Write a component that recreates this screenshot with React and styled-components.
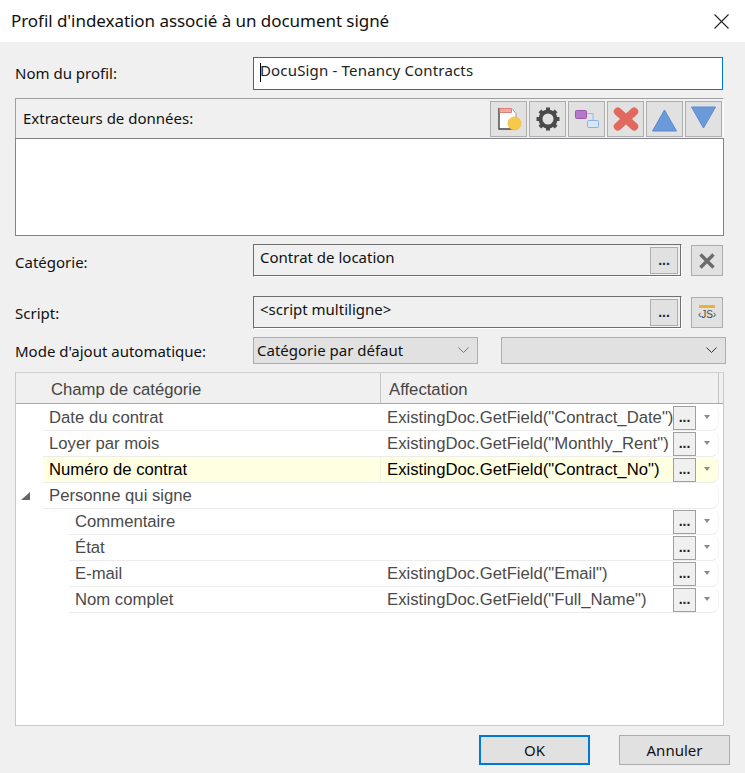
import React from "react";
import styled, { createGlobalStyle } from "styled-components";

const Global = createGlobalStyle`
  html, body { margin: 0; padding: 0; background: #f0f0f0; }
  * { box-sizing: border-box; }
`;
const UI = `"Noto Sans", "Open Sans", sans-serif`;
const GRID = `"Liberation Sans", Arial, sans-serif`;

const Dialog = styled.div`
  width: 745px; height: 773px; background: #f0f0f0; overflow: hidden;
  font-family: ${UI}; font-size: 15px; color: #000;
  display: flex; flex-direction: column;
`;
const TitleBar = styled.div`
  height: 42px; background: #fff; display: flex; align-items: center;
  justify-content: space-between; padding: 0 16px 0 11px; flex: none;
`;
const Title = styled.div`font-size: 17px; letter-spacing: -0.05px; color: #111; padding-bottom: 2px;`;
const CloseIcon = styled.svg`width: 15px; height: 15px; display: block;`;
const Content = styled.div`
  flex: 1; display: flex; flex-direction: column; padding: 15px 21px 0 15px;
`;
const FormRow = styled.div`
  display: grid; grid-template-columns: 238px 1fr; align-items: center;
  height: ${p => p.$h}px;
`;
const Label = styled.label`
  font-size: 15px; color: #111; padding-bottom: ${p => p.$pb || 0}px; padding-top: ${p => p.$pt || 0}px;
`;
const TextInput = styled.div`
  height: 33px; width: 470px; border: 1px solid #0078d7; background: #fff;
  padding: 0 6px 8px; display: flex; align-items: center;
  font-size: 15px; letter-spacing: 0.17px; color: #222; position: relative;
`;
const Caret = styled.span`
  position: absolute; left: 6px; top: 5px; width: 1px; height: 19px; background: #000;
`;
const Panel = styled.div`width: 709px; margin-top: 8px; flex: none;`;
const PanelHead = styled.div`
  height: 40px; border: 1px solid #a0a0a0; border-bottom: none; border-right-color: #fff;
  display: flex; align-items: center; justify-content: space-between; padding: 0 1px 0 7px;
`;
const Tools = styled.div`display: flex; gap: 2px; margin-top: 1px;`;
const ToolBtn = styled.button`
  width: 37px; height: 36px; padding: 0; background: #e1e1e1; border: 1px solid #adadad;
  display: flex; align-items: center; justify-content: center;
`;
const ListBox = styled.div`
  height: 98px; background: #fff; border: 1px solid #82828a;
`;
const PickerRow = styled.div`
  display: grid; grid-template-columns: 238px 429px 32px; align-items: center;
  margin-top: ${p => p.$mt}px; height: 33px;
`;
const Field = styled.div`
  height: 33px; width: 429px; background: #f0f0f0; border: 1px solid #6e6e6e;
  border-right-color: #fff; border-bottom-color: #fff; box-shadow: inset -1px -1px 0 #6e6e6e;
  display: flex; align-items: flex-start; justify-content: space-between;
  padding: 2px 3px 0 6px; font-size: 15px; color: #111; line-height: 20px;
`;
const Dots = styled.button`
  width: 28px; height: 27px; padding: 0 0 6px;
  background: #e1e1e1; border: 1px solid #adadad; font-family: ${GRID};
  font-size: 14px; font-weight: 700; color: #1a2a4a; line-height: 1; flex: none;
  display: flex; align-items: flex-end; justify-content: center;
`;
const RowDots = styled(Dots)`
  width: 23px; height: 24px; background: #f0f0f0; border-color: #a0a0a0; color: #222; padding-bottom: 5px;
`;
const SideBtn = styled.button`
  width: 32px; height: 31px; margin-left: 9px; padding: 0; background: #e1e1e1;
  border: 1px solid #adadad; display: flex; align-items: center; justify-content: center;
`;
const JsIcon = styled.span`
  display: flex; flex-direction: column; align-items: center; width: 17px; gap: 1px;
`;
const JsBar = styled.span`width: 16px; height: 3px; background: #f0b030; display: block;`;
const JsLabel = styled.span`
  font-family: ${GRID}; font-size: 10px; color: #444; line-height: 11px; letter-spacing: -0.1px; white-space: nowrap;
`;
const ModeRow = styled.div`
  display: grid; grid-template-columns: 238px 225px 225px; align-items: center;
  height: 27px; margin-top: 8px;
`;
const Select = styled.div`
  height: 27px; width: 225px; margin-left: ${p => p.$ml || 0}px; background: #e1e1e1;
  border: 1px solid #adadad; display: flex; align-items: center; justify-content: space-between;
  padding: 0 8px 1px 3px; font-size: 15px; color: #111;
`;
const Chevron = styled.svg`width: 11px; height: 6px; display: block; flex: none;`;
const Grid = styled.div`
  width: 709px; height: 354px; margin-top: 8px; background: #fff;
  border: 1px solid #c8c8c8; border-top-color: #d0d0d0; font-family: ${GRID}; font-size: 16.7px;
  flex: none;
`;
const Head = styled.div`
  height: 31px; background: #f0f0f0; border-bottom: 1px solid #a8a8a8;
  display: grid; grid-template-columns: 365px 338px 1fr; color: #444;
`;
const HeadCell = styled.div`
  padding: 3px 0 0 ${p => p.$pl}px; display: flex; align-items: center;
  border-right: 1px solid ${p => (p.$plain ? "transparent" : "#c4c4c4")};
`;
const Body = styled.div`padding-top: 1px;`;
const Row = styled.div`
  height: 26px; margin-left: ${p => p.$indent}px; width: ${p => 703 - p.$indent}px;
  display: grid; grid-template-columns: ${p => 364 - p.$indent}px 1fr; align-items: center;
  background: ${p => (p.$active ? "#ffffe1" : "#fff")};
  border-bottom: 1px solid #ececec; border-right: 1px solid #f2f2f2;
  border-radius: 0 8px 8px 0;
  color: ${p => (p.$active ? "#000" : "#4a4a4a")}; position: relative;
`;
const RowName = styled.div`padding-left: 6px; white-space: nowrap;`;
const RowValue = styled.div`
  display: flex; align-items: center; justify-content: space-between;
  padding-left: 6px; height: 25px; white-space: nowrap;
  border-left: 1px solid ${p => (p.$active ? "#f6f6e0" : "transparent")};
`;
const ValueText = styled.span`width: 286px; overflow: hidden; flex: none;`;
const RowTools = styled.div`display: flex; align-items: center; width: 45px; flex: none;`;
const Caretdown = styled.span`
  width: 0; height: 0; margin-left: 8px; margin-top: -2px;
  border-left: 3.5px solid transparent; border-right: 3.5px solid transparent;
  border-top: 4px solid #8a8a8a;
`;
const Expander = styled.svg`
  position: absolute; left: -23px; top: 8px; width: 11px; height: 10px;
`;
const Footer = styled.div`
  display: flex; justify-content: flex-end; gap: 29px; margin-top: 9px; width: 715px;
`;
const FootBtn = styled.button`
  width: 111px; height: 30px; background: #e1e1e1; padding: 0 0 1px;
  border: ${p => (p.$primary ? "2px solid #0078d7" : "1px solid #adadad")};
  font-family: ${UI}; font-size: 15px; color: #111;
`;

const rows = [
  { name: "Date du contrat", value: 'ExistingDoc.GetField("Contract_Date")', indent: 27 },
  { name: "Loyer par mois", value: 'ExistingDoc.GetField("Monthly_Rent")', indent: 27 },
  { name: "Numéro de contrat", value: 'ExistingDoc.GetField("Contract_No")', indent: 27, active: true },
  { name: "Personne qui signe", group: true, indent: 27 },
  { name: "Commentaire", value: "", indent: 53 },
  { name: "État", value: "", indent: 53 },
  { name: "E-mail", value: 'ExistingDoc.GetField("Email")', indent: 53 },
  { name: "Nom complet", value: 'ExistingDoc.GetField("Full_Name")', indent: 53 },
];

const DownChevron = ({ color }) => (
  <Chevron viewBox="0 0 11 6"><path d="M.5.5l5 5 5-5" fill="none" stroke={color} strokeWidth="1" /></Chevron>
);

export default function App() {
  return (
    <Dialog>
      <Global />
      <TitleBar>
        <Title>Profil d'indexation associé à un document signé</Title>
        <CloseIcon viewBox="0 0 15 15"><path d="M.5.5l14 14M14.5.5l-14 14" stroke="#222" strokeWidth="1.1" fill="none" /></CloseIcon>
      </TitleBar>
      <Content>
        <FormRow $h={33}>
          <Label $pb={2}>Nom du profil:</Label>
          <TextInput><Caret />DocuSign - Tenancy Contracts</TextInput>
        </FormRow>
        <Panel>
          <PanelHead>
            <Label $pb={2}>Extracteurs de données:</Label>
            <Tools>
              <ToolBtn>
                <svg width="26" height="26" viewBox="0 0 26 26">
                  <path d="M3 2h13l4 5v16H3z" fill="#fff" />
                  <path d="M3 2v21h15" fill="none" stroke="#444" strokeWidth="1.4" />
                  <path d="M3.5 2.5h12v4h-12z" fill="#f0a8a0" stroke="#d86a60" strokeWidth=".8" />
                  <path d="M16 2.5l4 5v8" fill="none" stroke="#999" strokeWidth="1" />
                  <circle cx="18.5" cy="17.5" r="6.5" fill="#f7c948" stroke="#f2b84a" strokeWidth=".8" />
                </svg>
              </ToolBtn>
              <ToolBtn>
                <svg width="26" height="26" viewBox="0 0 26 26">
                  <circle cx="13" cy="13" r="7.5" fill="none" stroke="#4a4a4a" strokeWidth="4" />
                  <path d="M13 1.5v4M13 20.5v4M1.5 13h4M20.5 13h4M4.9 4.9l2.8 2.8M18.3 18.3l2.8 2.8M21.1 4.9l-2.8 2.8M7.7 18.3l-2.8 2.8" stroke="#4a4a4a" strokeWidth="4" />
                </svg>
              </ToolBtn>
              <ToolBtn>
                <svg width="26" height="24" viewBox="0 0 26 24">
                  <path d="M12 6.5h7v6.5" fill="none" stroke="#9ab8e8" strokeWidth="1" />
                  <rect x="1.5" y="3.5" width="11" height="8" rx="1" fill="#b678c8" stroke="#9a58b0" />
                  <rect x="13.5" y="13.5" width="11" height="7" rx="1" fill="#d8e6fa" stroke="#8cb0e6" />
                </svg>
              </ToolBtn>
              <ToolBtn>
                <svg width="26" height="26" viewBox="0 0 26 26">
                  <path d="M4.8 5.5l16.4 15M21.2 5.5L4.8 20.5" stroke="#e2695e" strokeWidth="8" strokeLinecap="round" />
                </svg>
              </ToolBtn>
              <ToolBtn>
                <svg width="26" height="26" viewBox="0 0 26 26"><path d="M12.5 4l12 21H.5z" fill="#6a9ad8" stroke="#5a8ace" /></svg>
              </ToolBtn>
              <ToolBtn>
                <svg width="26" height="26" viewBox="0 0 26 26"><path d="M.5 1h24l-12 21z" fill="#6a9ad8" stroke="#5a8ace" /></svg>
              </ToolBtn>
            </Tools>
          </PanelHead>
          <ListBox />
        </Panel>
        <PickerRow $mt={8}>
          <Label $pt={2}>Catégorie:</Label>
          <Field>Contrat de location<Dots>...</Dots></Field>
          <SideBtn>
            <svg width="18" height="18" viewBox="0 0 18 18"><path d="M2.5 2.5l13 13M15.5 2.5l-13 13" stroke="#6c6c6c" strokeWidth="3.4" /></svg>
          </SideBtn>
        </PickerRow>
        <PickerRow $mt={19}>
          <Label>Script:</Label>
          <Field>&lt;script multiligne&gt;<Dots>...</Dots></Field>
          <SideBtn><JsIcon><JsBar /><JsLabel>‹JS›</JsLabel></JsIcon></SideBtn>
        </PickerRow>
        <ModeRow>
          <Label>Mode d'ajout automatique:</Label>
          <Select>Catégorie par défaut<DownChevron color="#777" /></Select>
          <Select $ml={23}><span /><DownChevron color="#333" /></Select>
        </ModeRow>
        <Grid>
          <Head>
            <HeadCell $pl={35}>Champ de catégorie</HeadCell>
            <HeadCell $pl={8}>Affectation</HeadCell>
            <HeadCell $plain $pl={0} />
          </Head>
          <Body>
            {rows.map(r => (
              <Row key={r.name} $indent={r.indent} $active={r.active}>
                {r.group && (
                  <Expander viewBox="0 0 11 10"><path d="M10 1v8H1z" fill="#666" /></Expander>
                )}
                <RowName>{r.name}</RowName>
                <RowValue $active={r.active}>
                  {!r.group && <ValueText>{r.value}</ValueText>}
                  {!r.group && (
                    <RowTools>
                      <RowDots>...</RowDots>
                      <Caretdown />
                    </RowTools>
                  )}
                </RowValue>
              </Row>
            ))}
          </Body>
        </Grid>
        <Footer>
          <FootBtn $primary>OK</FootBtn>
          <FootBtn>Annuler</FootBtn>
        </Footer>
      </Content>
    </Dialog>
  );
}
